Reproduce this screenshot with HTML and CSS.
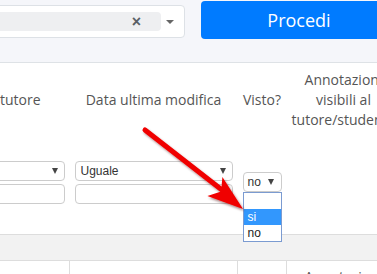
FILE: index.html
```html
<!DOCTYPE html>
<html lang="it">
<head>
  <meta charset="UTF-8">
  <meta name="viewport" content="width=device-width, initial-scale=1.0">
  <title>Annotazioni</title>
  <link rel="stylesheet" href="styles.css">
</head>
<body>
  <div class="topbar">
    <div class="picker">
      <div class="picker-value"><span class="picker-clear">&times;</span></div>
      <span class="picker-caret"><i></i></span>
    </div>
    <button type="button" class="btn-primary">Procedi</button>
  </div>

  <div class="grid-wrap">
    <table class="grid">
      <colgroup>
        <col class="c-name">
        <col class="c-date">
        <col class="c-seen">
        <col class="c-notes">
      </colgroup>
      <thead>
        <tr class="head-row">
          <th>Nome tutore</th>
          <th>Data ultima modifica</th>
          <th>Visto?</th>
          <th>Annotazioni<br>visibili al<br>tutore/studente</th>
        </tr>
        <tr class="filter-row">
          <td>
            <div class="fake-select"><span></span><i class="caret"></i></div>
            <input type="text" class="filter-input">
          </td>
          <td>
            <div class="fake-select"><span>Uguale</span><i class="caret"></i></div>
            <input type="text" class="filter-input">
          </td>
          <td>
            <div class="select-wrap">
              <div class="fake-select small"><span>no</span><i class="caret"></i></div>
              <ul class="dropdown">
                <li></li>
                <li class="selected">si</li>
                <li>no</li>
              </ul>
            </div>
          </td>
          <td></td>
        </tr>
      </thead>
      <tbody>
        <tr class="empty-row"><td colspan="4"></td></tr>
      </tbody>
      <tfoot>
        <tr class="foot-row">
          <th>Nome tutore</th>
          <th>Data ultima modifica</th>
          <th>Visto?</th>
          <th>Annotazioni<br>visibili al<br>tutore/studente</th>
        </tr>
      </tfoot>
    </table>
  </div>

  <svg class="arrow" width="377" height="274" viewBox="0 0 377 274">
    <defs>
      <filter id="shadow" x="-20%" y="-20%" width="140%" height="140%">
        <feDropShadow dx="1.5" dy="2" stdDeviation="1.2" flood-color="#400" flood-opacity="0.45"/>
      </filter>
    </defs>
    <g filter="url(#shadow)" fill="#f00000">
      <line x1="145" y1="130" x2="222" y2="190" stroke="#f00000" stroke-width="5" stroke-linecap="round"/>
      <polygon points="243,209 207.4,195.9 221.1,191.5 222.4,177.1"/>
    </g>
  </svg>
</body>
</html>
```

FILE: styles.css
```css
body {
  margin: 0;
  width: 377px;
  height: 274px;
  overflow: hidden;
  background-color: #fff;
  font-family: "Open Sans", sans-serif;
  position: relative;
}
.topbar {
  display: flex;
  align-items: flex-start;
  height: 62px;
  background-color: #f5f6fa;
  border-bottom: 1px solid #dee2e6;
}
.picker {
  display: flex;
  flex-shrink: 0;
  box-sizing: border-box;
  width: 250px;
  height: 33px;
  margin-top: 5px;
  margin-left: -65px;
  padding: 6px 0 6px 6px;
  background-color: #fff;
  border: 1px solid #dde1e6;
  border-radius: 4px;
}
.picker-value {
  flex: 1;
  display: flex;
  justify-content: flex-end;
  align-items: center;
  padding-right: 20px;
  background-color: #eeeff1;
  border-radius: 4px;
}
.picker-clear {
  font-family: "Liberation Sans", Arial, sans-serif;
  font-size: 16px;
  font-weight: bold;
  line-height: 20px;
  color: #5a5f66;
}
.picker-caret {
  width: 18px;
  padding-right: 5px;
  display: flex;
  justify-content: center;
  align-items: center;
}
.picker-caret i {
  width: 0;
  height: 0;
  border-left: 4px solid transparent;
  border-right: 4px solid transparent;
  border-top: 4px solid #666;
}
.btn-primary {
  width: 196px;
  height: 38px;
  margin-top: 1px;
  margin-left: 16px;
  flex-shrink: 0;
  background-color: #007bff;
  color: #fff;
  border: none;
  border-radius: 4px;
  font-family: "Open Sans", sans-serif;
  font-size: 18px;
  padding: 0;
}
.grid-wrap {
  width: 377px;
  overflow: hidden;
}
.grid {
  border-collapse: collapse;
  table-layout: fixed;
  width: 473px;
  margin-left: -73px;
}
.c-name { width: 142px; }
.c-date { width: 168px; }
.c-seen { width: 49px; }
.c-notes { width: 114px; }
.grid th {
  font-size: 14px;
  line-height: 20px;
  font-weight: normal;
  color: #555;
  text-align: center;
  vertical-align: middle;
  white-space: nowrap;
}
.head-row th {
  height: 74px;
  padding: 0 2px;
}
.filter-row td {
  height: 90px;
  padding: 0 5px 7px;
  vertical-align: middle;
}
.fake-select {
  display: flex;
  justify-content: space-between;
  align-items: center;
  box-sizing: border-box;
  height: 20px;
  padding: 0 6px 0 5px;
  border: 1px solid #ccc;
  border-radius: 4px;
  font-family: "Liberation Sans", Arial, sans-serif;
  font-size: 12px;
  color: #333;
  background-color: #fff;
}
.fake-select.small {
  width: 39px;
  padding: 0 7px 0 4px;
}
.caret {
  width: 0;
  height: 0;
  border-left: 3.5px solid transparent;
  border-right: 3.5px solid transparent;
  border-top: 6px solid #444;
}
.filter-input {
  display: block;
  box-sizing: border-box;
  width: 100%;
  height: 20px;
  margin: 3px 0 0;
  border: 1px solid #ccc;
  border-radius: 4px;
}
.select-wrap {
  position: relative;
}
.dropdown {
  position: absolute;
  top: 100%;
  left: 0;
  z-index: 2;
  box-sizing: border-box;
  width: 39px;
  margin: 0;
  padding: 0;
  list-style: none;
  background-color: #fff;
  border: 1px solid #7b9bd1;
}
.dropdown li {
  height: 16px;
  line-height: 16px;
  padding-left: 4px;
  font-family: "Liberation Sans", Arial, sans-serif;
  font-size: 12px;
  color: #222;
}
.dropdown li.selected {
  background-color: #3297fd;
  color: #fff;
}
.empty-row td {
  height: 25px;
  padding: 0;
  background-color: #f2f2f2;
  border-top: 1px solid #ddd;
  border-bottom: 1px solid #ddd;
}
.foot-row th {
  padding: 6px 2px;
  border-left: 1px solid #ddd;
  border-right: 1px solid #ddd;
}
.arrow {
  position: absolute;
  top: 0;
  left: 0;
  z-index: 3;
  pointer-events: none;
}
```
